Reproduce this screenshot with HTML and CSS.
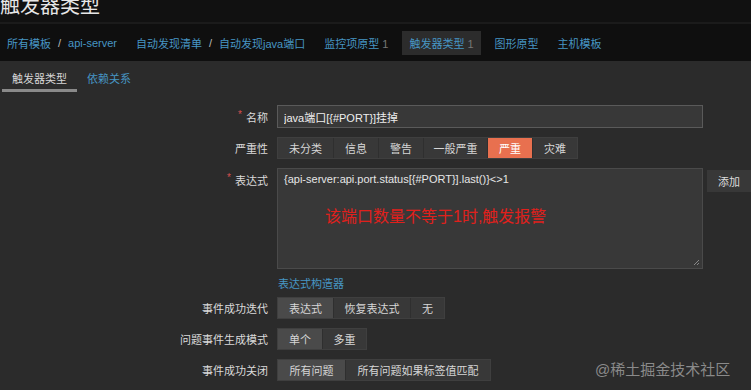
FILE: index.html
```html
<!DOCTYPE html>
<html lang="zh">
<head>
<meta charset="UTF-8" />
<title>触发器类型</title>
<link rel="stylesheet" href="styles.css">
</head>
<body>

<div class="header"><h1>触发器类型</h1></div>

<div class="crumbs">
  <a class="crumb first">所有模板</a><span class="sep">/</span><a class="crumb">api-server</a>
  <a class="crumb gap">自动发现清单</a><span class="sep">/</span><a class="crumb">自动发现java端口</a>
  <a class="crumb gap">监控项原型 <span class="num">1</span></a>
  <a class="crumb gap active">触发器类型 <span class="num">1</span></a>
  <a class="crumb gap">图形原型</a>
  <a class="crumb gap">主机模板</a>
</div>

<div class="tabs">
  <span class="tab current">触发器类型</span>
  <span class="tab">依赖关系</span>
</div>

<div class="form">
  <div class="row">
    <label class="lbl req">名称</label>
    <input class="text" type="text" value="java端口[{#PORT}]挂掉" />
  </div>

  <div class="row">
    <label class="lbl">严重性</label>
    <div class="seg">
      <span class="w55">未分类</span><span class="w45">信息</span><span class="w45">警告</span><span class="w64">一般严重</span><span class="w45 high">严重</span><span class="w45">灾难</span>
    </div>
  </div>

  <div class="row top">
    <label class="lbl req">表达式</label>
    <div class="expr">
      <div class="code">{api-server:api.port.status[{#PORT}].last()}&lt;&gt;1</div>
      <div class="note">该端口数量不等于1时,触发报警</div>
      <svg class="grip" width="8" height="8" viewBox="0 0 8 8"><path d="M7 2 L2 7 M7 5 L5 7" stroke="#888" stroke-width="1"/></svg>
    </div>
    <button class="add">添加</button>
  </div>

  <div class="row link-row">
    <span class="lbl"></span>
    <a class="link">表达式构造器</a>
  </div>

  <div class="row">
    <label class="lbl">事件成功迭代</label>
    <div class="seg">
      <span class="w55 on">表达式</span><span class="w77">恢复表达式</span><span class="w33">无</span>
    </div>
  </div>

  <div class="row">
    <label class="lbl">问题事件生成模式</label>
    <div class="seg">
      <span class="w45 on">单个</span><span class="w44">多重</span>
    </div>
  </div>

  <div class="row">
    <label class="lbl">事件成功关闭</label>
    <div class="seg">
      <span class="w68 on">所有问题</span><span class="w145">所有问题如果标签值匹配</span>
    </div>
  </div>

  <div class="mark">@稀土掘金技术社区</div>
</div>

</body>
</html>
```

FILE: styles.css
```css
body { margin: 0; background: #2b2b2b; color: #d6d6d6; font-family: "Liberation Sans", "Noto Sans CJK SC", sans-serif; font-size: 11px; width: 751px; height: 390px; overflow: hidden; }
.header { height: 22px; background: #111; border-bottom: 2px solid #1b1b1b; overflow: hidden; }
.header h1 { margin: -7px 0 0 0; font-size: 20px; font-weight: normal; color: #e6e6e6; line-height: 26px; }
.crumbs { height: 37px; background: #0f0f0f; display: flex; align-items: center; color: #4796c4; white-space: nowrap; }
.crumb { padding: 3px 5px; }
.crumb.first { margin-left: 2px; }
.crumb.gap { margin-left: 9px; }
.sep { color: #bbb; margin: 0 2px; }
.num { color: #777; }
.crumb.active { background: #2c2c2c; padding: 4px 7px; }
.tabs { height: 31px; display: flex; align-items: flex-start; padding-left: 2px; }
.tab { color: #4796c4; padding: 9px 10px 0 10px; height: 19px; white-space: nowrap; }
.tab.current { color: #d6d6d6; border-bottom: 3px solid #8a8a8a; }
.form { position: relative; padding-top: 13px; }
.row { display: flex; align-items: center; margin-bottom: 9px; }
.row.top { align-items: flex-start; }
.lbl { width: 277px; text-align: right; padding-right: 9px; box-sizing: border-box; color: #dadada; }
.row.top .lbl { padding-top: 4px; }
.lbl.req::before { content: "*"; color: #d64e4e; margin-right: 4px; font-size: 10px; vertical-align: top; }
.text { width: 426px; height: 23px; box-sizing: border-box; background: #383838; border: 1px solid #5a5a5a; color: #eee; font: inherit; padding: 0 6px; margin: 0; }
.seg { display: flex; background: #383838; border: 1px solid #3f3f3f; height: 22px; box-sizing: border-box; }
.seg span { display: flex; align-items: center; justify-content: center; border-right: 1px solid #2f2f2f; color: #d6d6d6; }
.seg span:last-child { border-right: none; }
.seg .on { background: #4a4a4a; }
.seg .high { background: #e8704f; color: #fff; }
.w33 { width: 33px; } .w44 { width: 43px; } .w45 { width: 44px; } .w55 { width: 55px; } .w64 { width: 63px; }
.w68 { width: 67px; } .w77 { width: 76px; } .w145 { width: 144px; }
.expr { position: relative; width: 426px; height: 101px; box-sizing: border-box; background: #383838; border: 1px solid #4a4a4a; padding: 4px 6px; }
.code { color: #e6e6e6; }
.note { color: #e0201c; font-size: 16px; margin: 18px 0 0 41px; }
.grip { position: absolute; right: 2px; bottom: 2px; }
.add { margin: 2px 0 0 4px; width: 44px; height: 22px; background: #383838; border: none; color: #ddd; font: inherit; padding: 0; }
.link-row { margin-top: -3px; margin-bottom: 6px; }
.link { color: #4796c4; margin-left: 1px; }
.mark { position: absolute; left: 595px; top: 266px; color: #8a8a8a; font-size: 15px; }
```
